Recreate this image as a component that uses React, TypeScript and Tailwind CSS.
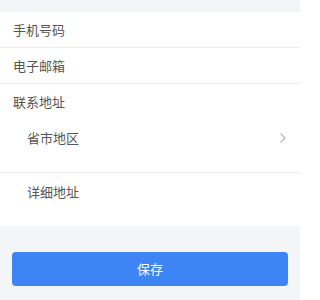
import React from "react";

const font = { fontFamily: '"Noto Sans CJK SC", "Noto Sans", sans-serif' };

export default function App() {
  return (
    <div
      className="w-[300px] h-[300px] bg-[#f4f5f7] pt-3 overflow-hidden text-[13px] text-[#555555]"
      style={font}
    >
      <div className="bg-white">
        <div className="h-9 flex items-center px-[13px] border-b border-[#ececec]">手机号码</div>
        <div className="h-9 flex items-center px-[13px] border-b border-[#ececec]">电子邮箱</div>
        <div className="h-9 flex items-center px-[13px]">联系地址</div>
        <div className="h-[53px] flex items-start justify-between pt-[9px] pl-[27px] pr-[14px] border-b border-[#ececec] leading-[18px]">
          <span>省市地区</span>
          <svg width="6" height="10" viewBox="0 0 6 10" className="mt-[4px]">
            <path d="M1 1l4 4-4 4" fill="none" stroke="#b8b8b8" strokeWidth="1.2" strokeLinecap="round" strokeLinejoin="round" />
          </svg>
        </div>
        <div className="h-[53px] flex items-start pt-[10px] pl-[27px] leading-[18px]">详细地址</div>
      </div>
      <div className="px-3 mt-[26px]">
        <button className="w-full h-[34px] rounded-[4px] bg-[#3d84f5] text-white text-[13px] flex items-center justify-center">
          保存
        </button>
      </div>
    </div>
  );
}
